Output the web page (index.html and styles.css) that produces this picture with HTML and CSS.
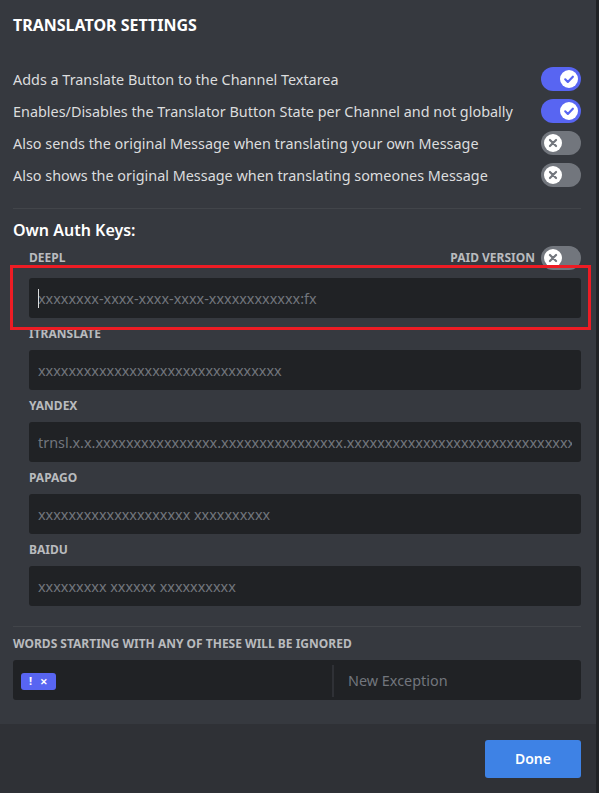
FILE: index.html
```html
<!DOCTYPE html>
<html lang="en">

<head>
    <meta charset="UTF-8">
    <meta name="viewport" content="width=device-width, initial-scale=1.0">
    <title>Translator Settings</title>
    <link rel="stylesheet" href="styles.css">
</head>

<body>
    <div class="modal">
        <div class="modal-content">
            <h2 class="title">TRANSLATOR SETTINGS</h2>

            <div class="switch-row">
                <span>Adds a Translate Button to the Channel Textarea</span>
                <span class="toggle on"><span class="knob"><svg viewBox="0 0 20 20"><path d="M5.8 10.4l2.9 2.9 5.6-5.8"/></svg></span></span>
            </div>
            <div class="switch-row">
                <span>Enables/Disables the Translator Button State per Channel and not globally</span>
                <span class="toggle on"><span class="knob"><svg viewBox="0 0 20 20"><path d="M5.8 10.4l2.9 2.9 5.6-5.8"/></svg></span></span>
            </div>
            <div class="switch-row">
                <span>Also sends the original Message when translating your own Message</span>
                <span class="toggle"><span class="knob"><svg viewBox="0 0 20 20"><path d="M6.6 6.6l6.8 6.8M13.4 6.6l-6.8 6.8"/></svg></span></span>
            </div>
            <div class="switch-row">
                <span>Also shows the original Message when translating someones Message</span>
                <span class="toggle"><span class="knob"><svg viewBox="0 0 20 20"><path d="M6.6 6.6l6.8 6.8M13.4 6.6l-6.8 6.8"/></svg></span></span>
            </div>

            <div class="divider first"></div>

            <h3 class="subtitle">Own Auth Keys:</h3>

            <div class="keys">
                <div class="key-head">
                    <span class="label">DEEPL</span>
                    <span class="paid">
                        <span class="label">PAID VERSION</span>
                        <span class="toggle"><span class="knob"><svg viewBox="0 0 20 20"><path d="M6.6 6.6l6.8 6.8M13.4 6.6l-6.8 6.8"/></svg></span></span>
                    </span>
                </div>
                <div class="focused">
                    <input type="text" class="key-input" placeholder="xxxxxxxx-xxxx-xxxx-xxxx-xxxxxxxxxxxx:fx">
                    <span class="caret"></span>
                    <span class="highlight"></span>
                </div>

                <div class="label">ITRANSLATE</div>
                <input type="text" class="key-input" placeholder="xxxxxxxxxxxxxxxxxxxxxxxxxxxxxxxx">

                <div class="label">YANDEX</div>
                <input type="text" class="key-input" placeholder="trnsl.x.x.xxxxxxxxxxxxxxxx.xxxxxxxxxxxxxxxx.xxxxxxxxxxxxxxxxxxxxxxxxxxxxxxxxxxxxxxxx">

                <div class="label">PAPAGO</div>
                <input type="text" class="key-input" placeholder="xxxxxxxxxxxxxxxxxxxx xxxxxxxxxx">

                <div class="label">BAIDU</div>
                <input type="text" class="key-input" placeholder="xxxxxxxxx xxxxxx xxxxxxxxxx">
            </div>

            <div class="divider second"></div>

            <div class="label">WORDS STARTING WITH ANY OF THESE WILL BE IGNORED</div>
            <div class="exceptions">
                <div class="tags">
                    <span class="tag">! <span class="tag-x">&#10005;</span></span>
                </div>
                <input type="text" class="exception-input" placeholder="New Exception">
            </div>
        </div>

        <div class="modal-footer">
            <button class="done">Done</button>
        </div>
    </div>
</body>

</html>
```

FILE: styles.css
```css
body {
    margin: 0;
    background-color: #202225;
    font-family: "Noto Sans", "Open Sans", sans-serif;
    color: #dcddde;
}

.modal {
    width: 596px;
    height: 793px;
    background-color: #36393f;
    display: flex;
    flex-direction: column;
}

.modal-content {
    padding: 13px 15px 0 13px;
    flex: 1;
}

.title {
    margin: 0 0 26px;
    font-size: 16px;
    font-weight: 700;
    color: #fff;
    line-height: 24px;
}

.switch-row {
    display: flex;
    justify-content: space-between;
    align-items: center;
    height: 32px;
    font-size: 14.4px;
}

.toggle {
    width: 40px;
    height: 24px;
    border-radius: 12px;
    background-color: #72767d;
    display: flex;
    align-items: center;
    flex-shrink: 0;
    box-sizing: border-box;
    padding: 0 3px;
}

.toggle.on {
    background-color: #5865f2;
    justify-content: flex-end;
}

.knob {
    width: 18px;
    height: 18px;
    border-radius: 50%;
    background-color: #fff;
    display: flex;
    align-items: center;
    justify-content: center;
}

.knob svg {
    width: 18px;
    height: 18px;
    fill: none;
    stroke: #72767d;
    stroke-width: 2.4;
    stroke-linecap: round;
    stroke-linejoin: round;
}

.toggle.on .knob svg {
    stroke: #5865f2;
}

.divider {
    height: 1px;
    background-color: #42454a;
}

.divider.first {
    margin: 17px 0 9px;
}

.divider.second {
    margin: 20px 0 9px;
}

.subtitle {
    margin: 0 0 4px;
    font-size: 16px;
    font-weight: 600;
    color: #fff;
    line-height: 24px;
}

.keys {
    padding-left: 16px;
}

.label {
    font-size: 12px;
    font-weight: 700;
    color: #b9bbbe;
    line-height: 16px;
    margin-bottom: 8px;
}

.key-head {
    display: flex;
    justify-content: space-between;
    align-items: center;
    height: 24px;
    margin-bottom: 8px;
}

.key-head .label {
    margin-bottom: 0;
}

.paid {
    display: flex;
    align-items: center;
    gap: 6px;
}

.focused {
    position: relative;
}

.highlight {
    position: absolute;
    top: -13px;
    left: -19px;
    right: -10px;
    bottom: -12px;
    border: 3px solid #ed1c24;
}

.caret {
    position: absolute;
    left: 9px;
    top: 11px;
    width: 1px;
    height: 19px;
    background-color: #dcddde;
}

.key-input {
    display: block;
    width: 100%;
    height: 40px;
    box-sizing: border-box;
    border: none;
    border-radius: 3px;
    background-color: #202225;
    padding: 0 9px;
    font-family: "Noto Sans", "Open Sans", sans-serif;
    font-size: 14.4px;
    color: #dcddde;
    outline: none;
    margin-bottom: 8px;
}

.keys .key-input:last-child {
    margin-bottom: 0;
}

.key-input::placeholder, .exception-input::placeholder {
    color: #72767d;
}

.exceptions {
    display: flex;
    height: 40px;
    background-color: #202225;
    border-radius: 3px;
}

.tags {
    width: 311px;
    display: flex;
    align-items: center;
    padding-left: 8px;
    border-right: 2px solid #2f3136;
    margin: 5px 0 3px;
}

.tag {
    background-color: #5865f2;
    color: #fff;
    font-size: 11px;
    font-weight: 700;
    border-radius: 3px;
    padding: 1px 8px;
    line-height: 14px;
}

.tag-x {
    margin-left: 5px;
    font-size: 9px;
}

.exception-input {
    flex: 1;
    border: none;
    background: transparent;
    padding: 0 14px;
    font-family: "Noto Sans", "Open Sans", sans-serif;
    font-size: 14.4px;
    color: #dcddde;
    outline: none;
}

.modal-footer {
    background-color: #2f3136;
    height: 69px;
    display: flex;
    justify-content: flex-end;
    align-items: center;
    padding: 0 15px 0 0;
}

.done {
    width: 96px;
    height: 38px;
    border: none;
    border-radius: 3px;
    background-color: #3e82e5;
    color: #fff;
    font-family: "Noto Sans", "Open Sans", sans-serif;
    font-size: 14px;
    font-weight: 600;
    cursor: pointer;
}
```
